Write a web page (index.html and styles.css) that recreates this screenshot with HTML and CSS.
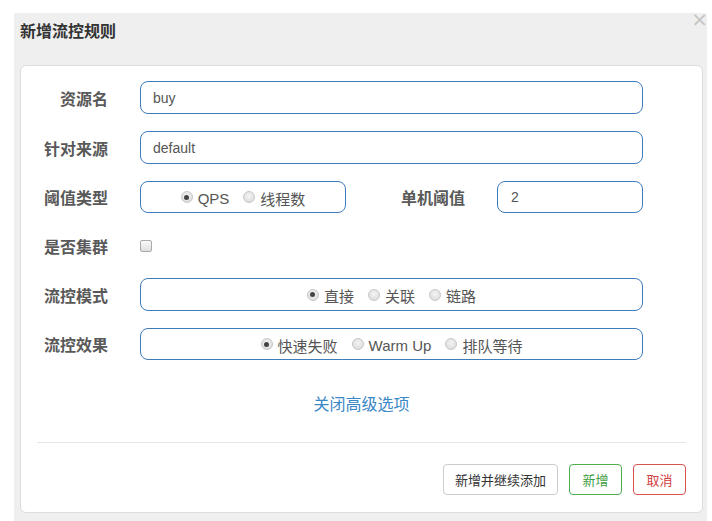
FILE: index.html
```html
<!DOCTYPE html>
<html lang="zh">
<head>
<meta charset="utf-8">
<title>新增流控规则</title>
<link rel="stylesheet" href="styles.css">
</head>
<body>
<div class="modal">
  <div class="modal-head">
    <h3 class="title">新增流控规则</h3>
    <span class="close">×</span>
  </div>
  <div class="card">
    <div class="form">
      <div class="row">
        <label class="lbl">资源名</label>
        <div class="field grow"><span class="val">buy</span></div>
      </div>
      <div class="row">
        <label class="lbl">针对来源</label>
        <div class="field grow"><span class="val">default</span></div>
      </div>
      <div class="row row-mid">
        <label class="lbl">阈值类型</label>
        <div class="field radios type-box">
          <span class="radio on"></span><span class="rt">QPS</span>
          <span class="radio"></span><span class="rt">线程数</span>
        </div>
        <label class="lbl lbl2">单机阈值</label>
        <div class="field num-box"><span class="val val2">2</span></div>
      </div>
      <div class="row row-short">
        <label class="lbl">是否集群</label>
        <span class="checkbox"></span>
      </div>
      <div class="row">
        <label class="lbl">流控模式</label>
        <div class="field radios grow">
          <span class="radio on"></span><span class="rt">直接</span>
          <span class="radio"></span><span class="rt">关联</span>
          <span class="radio"></span><span class="rt">链路</span>
        </div>
      </div>
      <div class="row row-mid">
        <label class="lbl">流控效果</label>
        <div class="field radios grow">
          <span class="radio on"></span><span class="rt">快速失败</span>
          <span class="radio"></span><span class="rt latin">Warm Up</span>
          <span class="radio"></span><span class="rt">排队等待</span>
        </div>
      </div>
    </div>
    <div class="adv"><a class="adv-link">关闭高级选项</a></div>
    <div class="footer">
      <button class="btn btn-default">新增并继续添加</button>
      <button class="btn btn-green">新增</button>
      <button class="btn btn-red">取消</button>
    </div>
  </div>
</div>
</body>
</html>
```
FILE: styles.css
```css
* { box-sizing: border-box; }
html, body { margin: 0; padding: 0; background: #fff; }
body {
  font-family: "Liberation Sans", "Noto Sans CJK SC", sans-serif;
  color: #555;
}
.modal {
  position: relative;
  margin: 13px 0 0 14px;
  width: 693px;
  height: 508px;
  background: #efefef;
  padding: 0 4px 0 6px;
}
.modal-head {
  height: 52px;
  display: flex;
  align-items: center;
}
.title {
  margin: 0;
  font-family: "Noto Sans CJK SC", sans-serif;
  font-size: 16px;
  font-weight: 700;
  color: #333;
  line-height: 22px;
  margin-top: -19px;
}
.close {
  position: absolute;
  right: -1px;
  top: -6px;
  font-family: "DejaVu Sans", sans-serif;
  font-size: 20px;
  line-height: 24px;
  color: #c4c4c4;
}
.card {
  background: #fff;
  border: 1px solid #dcdcdc;
  border-radius: 6px;
  padding: 15px 16px 16px 16px;
  height: 448px;
}
.form {
  display: flex;
  flex-direction: column;
  gap: 17px;
  width: 606px;
}
.row {
  display: flex;
  align-items: center;
  height: 33px;
}
.row-mid { height: 32px; }
.row-short { height: 31px; }
.lbl {
  width: 71px;
  text-align: right;
  font-family: "Noto Sans CJK SC", sans-serif;
  font-weight: 700;
  font-size: 16px;
  color: #595959;
  margin-right: 32px;
  flex-shrink: 0;
}
.lbl2 { width: 65px; margin-left: 54px; }
.field {
  height: 33px;
  border: 1px solid #3f7cbc;
  border-radius: 8px;
  display: flex;
  align-items: center;
}
.row-mid .field { height: 32px; }
.grow { flex: 1; }
.type-box { width: 206px; }
.num-box { width: 146px; }
.val {
  padding-left: 12px;
  font-size: 14px;
  color: #555;
}
.val2 { padding-left: 13px; }
.radios {
  justify-content: center;
  font-size: 15px;
  padding-top: 2px;
}
.radio {
  width: 12px;
  height: 12px;
  border-radius: 50%;
  background: radial-gradient(circle at 50% 40%, #f4f4f4, #d6d6d6);
  border: 1px solid #c8c8c8;
  position: relative;
  flex-shrink: 0;
  margin-top: -2px;
}
.radio.on::after {
  content: "";
  position: absolute;
  left: 2.5px;
  top: 2.5px;
  width: 5px;
  height: 5px;
  border-radius: 50%;
  background: #444;
}
.rt {
  margin-left: 5px;
  margin-right: 14px;
  font-family: "Liberation Sans", "Noto Sans CJK SC", sans-serif;
  color: #555;
}
.rt:last-child { margin-right: 0; }
.checkbox {
  width: 12px;
  height: 12px;
  border: 1px solid #aaa;
  border-radius: 2px;
  background: linear-gradient(#fafafa, #dedede);
}
.adv {
  text-align: center;
  margin-top: 31px;
  height: 24px;
}
.adv-link {
  font-family: "Noto Sans CJK SC", sans-serif;
  font-size: 16px;
  color: #3a87c8;
  line-height: 24px;
}
.footer {
  margin-top: 27px;
  border-top: 1px solid #e5e5e5;
  padding-top: 21px;
  display: flex;
  justify-content: flex-end;
  gap: 11px;
}
.btn {
  font-family: "Noto Sans CJK SC", sans-serif;
  font-size: 13px;
  height: 31px;
  padding: 0 11px;
  border-radius: 4px;
  background: #fff;
  border: 1px solid #ccc;
  color: #333;
}
.btn-default { width: 115px; }
.btn-green { border-color: #4cae4c; color: #3e9d3e; width: 53px; }
.btn-red { border-color: #d9534f; color: #d0403c; width: 53px; }
```
